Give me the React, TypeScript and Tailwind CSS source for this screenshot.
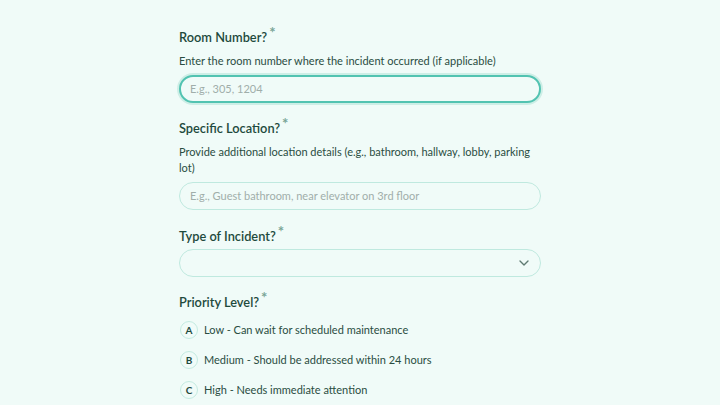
import { ChevronDown } from "lucide-react";

const priorities = [
  { key: "A", label: "Low - Can wait for scheduled maintenance" },
  { key: "B", label: "Medium - Should be addressed within 24 hours" },
  { key: "C", label: "High - Needs immediate attention" },
];

const Label = ({ text }: { text: string }) => (
  <div className="flex items-start h-5">
    <span className="text-[12.8px] leading-5 font-semibold text-[#1e4a3d]">{text}</span>
    <span className="ml-[2px] -mt-[5px] text-[15px] leading-5 font-bold text-[#7aa597]">*</span>
  </div>
);

export default function App() {
  return (
    <div
      className="min-h-[405px] w-full bg-[#f0fbf8]"
      style={{ fontFamily: "Lato, 'Noto Sans', sans-serif" }}
    >
      <div className="mx-auto w-[362px] pt-[27px]">
        {/* Room Number */}
        <section>
          <Label text="Room Number?" />
          <p className="mt-[6px] text-[11px] leading-4 text-[#2a4d42]">
            Enter the room number where the incident occurred (if applicable)
          </p>
          <div className="mt-[6px] h-[28px] rounded-full border-2 border-[#52c3b1] bg-[#f0fbf8] px-[9px] ring-2 ring-[#cdeee6] flex items-center">
            <span className="text-[11px] text-[#a0aeaa]">E.g., 305, 1204</span>
          </div>
        </section>

        {/* Specific Location */}
        <section className="mt-[15px]">
          <Label text="Specific Location?" />
          <p className="mt-[6px] text-[11px] leading-4 text-[#2a4d42]">
            Provide additional location details (e.g., bathroom, hallway, lobby, parking lot)
          </p>
          <div className="mt-[6px] h-[28px] rounded-full border border-[#bfe9df] px-[10px] flex items-center">
            <span className="text-[11px] text-[#a0aeaa]">E.g., Guest bathroom, near elevator on 3rd floor</span>
          </div>
        </section>

        {/* Type of Incident */}
        <section className="mt-[16px]">
          <Label text="Type of Incident?" />
          <div className="mt-[3px] h-[28px] rounded-full border border-[#bfe9df] pl-[10px] pr-[8px] flex items-center justify-end">
            <ChevronDown className="h-4 w-4 text-[#5f7a72]" strokeWidth={2} />
          </div>
        </section>

        {/* Priority Level */}
        <section className="mt-[15px]">
          <Label text="Priority Level?" />
          <div className="mt-[9px] flex flex-col gap-[12px]">
            {priorities.map((p) => (
              <div key={p.key} className="flex items-center h-[18px]">
                <span className="ml-[1px] h-[18px] w-[18px] rounded-full border border-[#c4ebe1] flex items-center justify-center text-[10px] font-bold text-[#1e4a3d]">
                  {p.key}
                </span>
                <span className="ml-[6px] text-[11px] text-[#2a4d42]">{p.label}</span>
              </div>
            ))}
          </div>
        </section>
      </div>
    </div>
  );
}
